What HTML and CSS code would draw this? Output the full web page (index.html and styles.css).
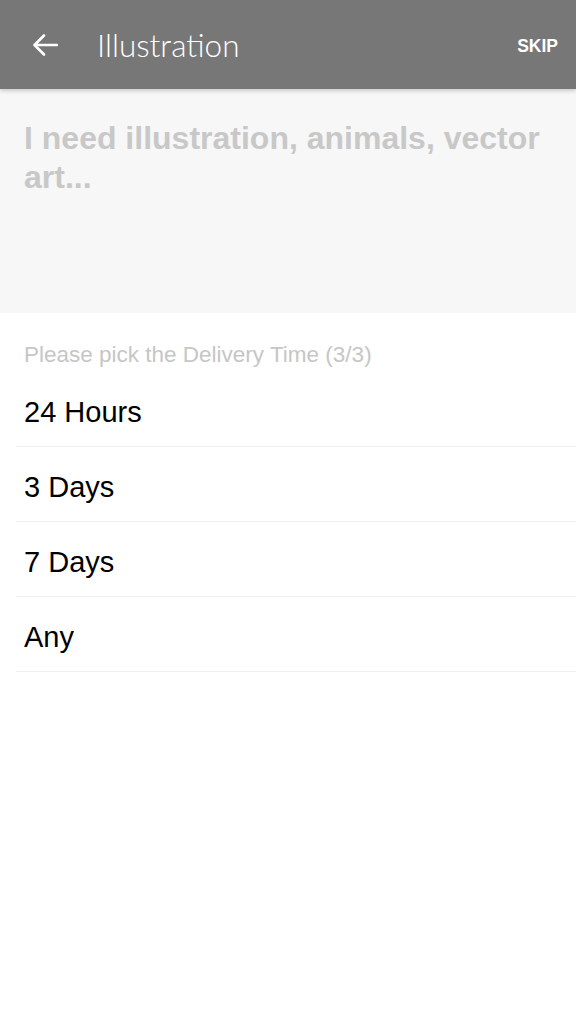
FILE: index.html
```html
<!DOCTYPE html>
<html>
<head>
<meta charset="utf-8">
<link rel="stylesheet" href="styles.css">
</head>
<body>
<div class="app">
  <header class="topbar">
    <button class="back" aria-label="Back">
      <svg width="26" height="24" viewBox="0 0 26 24"><path d="M25 12H3M12 2.5L2.5 12L12 21.5" fill="none" stroke="#fff" stroke-width="2.6" stroke-linecap="round" stroke-linejoin="round"/></svg>
    </button>
    <h1 class="title">Illustration</h1>
    <span class="skip">SKIP</span>
  </header>
  <section class="query">
    <p class="placeholder">I need illustration, animals, vector art...</p>
  </section>
  <section class="options">
    <p class="label">Please pick the Delivery Time (3/3)</p>
    <ul class="list">
      <li class="item">24 Hours</li>
      <li class="item">3 Days</li>
      <li class="item">7 Days</li>
      <li class="item">Any</li>
    </ul>
  </section>
</div>
</body>
</html>
```

FILE: styles.css
```css
* { box-sizing: border-box; }
html, body { margin: 0; padding: 0; background: #fff; }
.app { width: 576px; min-height: 1024px; background: #fff; font-family: "Liberation Sans", Arial, sans-serif; }
.topbar {
  height: 89px;
  background: #777777;
  display: flex;
  align-items: center;
  padding: 0 18px 0 32px;
  box-shadow: 0 2px 4px rgba(0,0,0,0.18);
  position: relative;
  z-index: 1;
}
.back { background: none; border: 0; padding: 0; margin: 0; width: 26px; height: 24px; display: flex; }
.title {
  margin: 0 0 0 39px;
  flex: 1;
  font-family: Lato, "Open Sans", sans-serif;
  font-weight: 300;
  font-size: 31.5px;
  color: #fff;
}
.skip { font-weight: 700; font-size: 17.5px; color: #fff; padding-top: 4px; }
.query { height: 224px; background: #f7f7f7; padding: 30px 24px 0; }
.placeholder { margin: 0; font-weight: 700; font-size: 32px; line-height: 39px; color: #c8c8c8; }
.options { padding-top: 29px; }
.label { margin: 0 0 0 24px; font-size: 22.5px; line-height: 26px; color: #c6c6c6; }
.list { list-style: none; margin: 4px 0 0 16px; padding: 0; }
.item {
  height: 75px;
  display: flex;
  align-items: center;
  padding: 6px 0 0 8px;
  font-size: 29px;
  color: #000;
  border-bottom: 1px solid #efefef;
}
```
